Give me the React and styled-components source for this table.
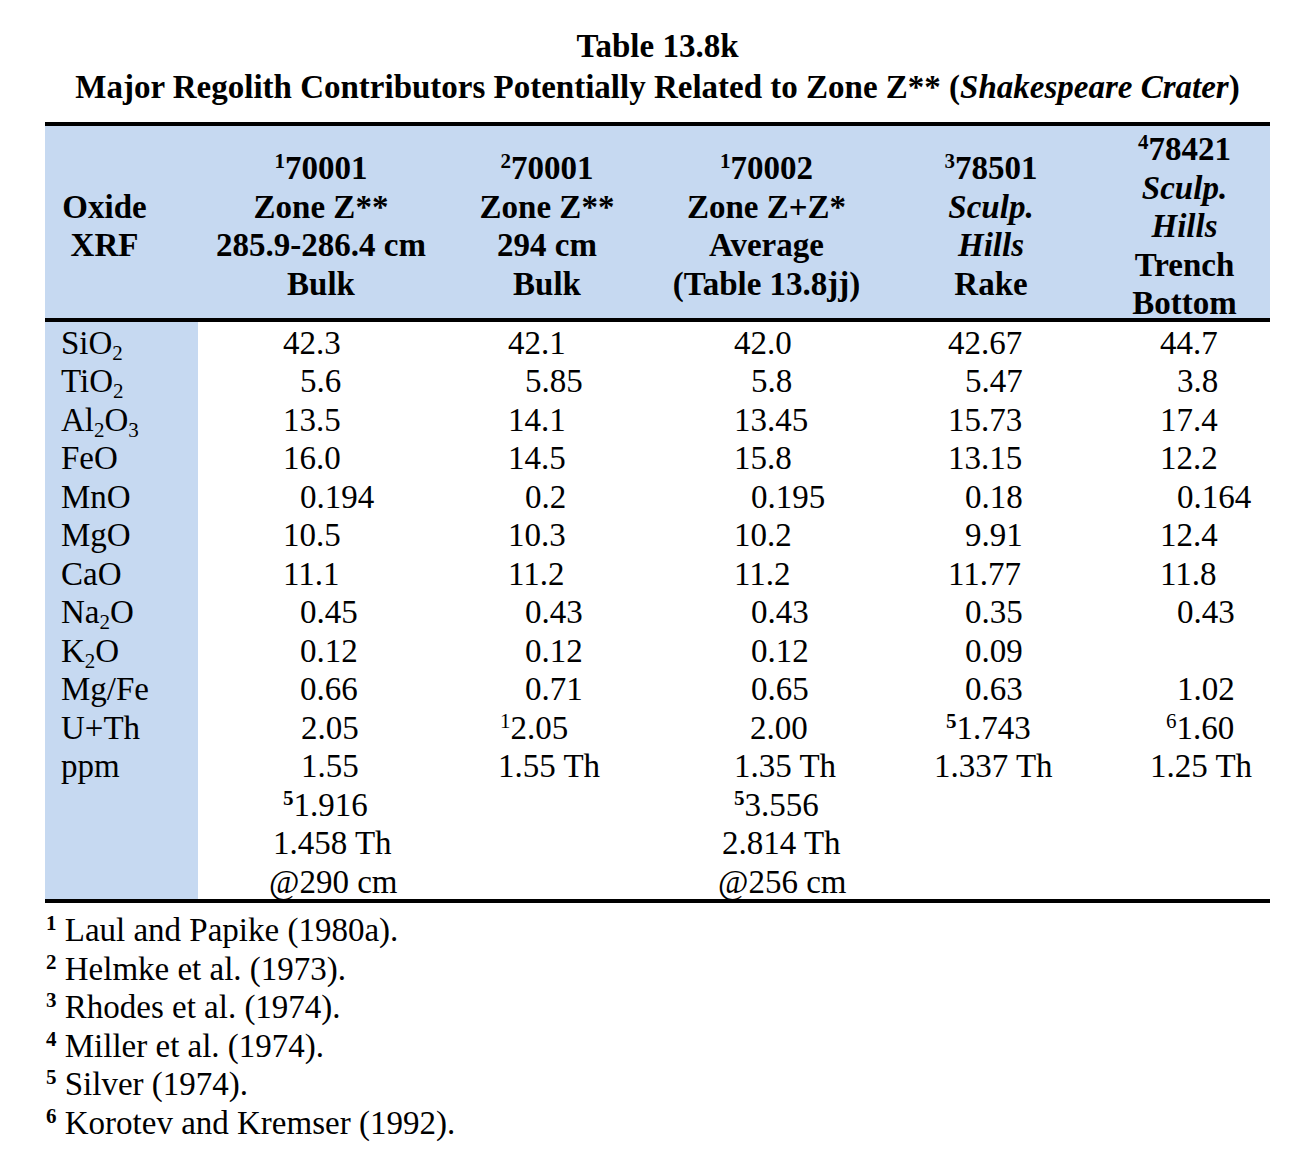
import React from 'react';
import styled, { createGlobalStyle } from 'styled-components';

const Global = createGlobalStyle`
  html, body { margin: 0; padding: 0; background: #fff; }
  body { font-family: "Liberation Serif", "Times New Roman", serif; color: #000; }
`;

const COLS = '153px 246px 206px 233px 216px 171px';
const BLUE = '#c6d9f1';

const Page = styled.div`
  width: 1304px;
  min-height: 1170px;
  box-sizing: border-box;
  padding: 26px 0 0 45px;
`;

const Caption = styled.h1`
  margin: 0;
  width: 1225px;
  text-align: center;
  font-size: 33px;
  line-height: 41px;
  font-weight: bold;
`;

const Table = styled.div`
  width: 1225px;
  margin-top: 14px;
  border-top: 4px solid #000;
  border-bottom: 4px solid #000;
  font-size: 33px;
`;

const HeadRow = styled.div`
  display: grid;
  grid-template-columns: ${COLS};
  height: 192px;
  background: ${BLUE};
  border-bottom: 4px solid #000;
  font-weight: bold;
  line-height: 38.5px;
`;

const HeadCell = styled.div`
  display: flex;
  flex-direction: column;
  justify-content: center;
  align-items: center;
  text-align: center;
  white-space: nowrap;
  padding-top: 4px;
  padding-right: ${p => p.$shift || 0}px;
`;

const Row = styled.div`
  display: grid;
  grid-template-columns: ${COLS};
  line-height: 38.47px;
`;

const LabelCell = styled.div`
  background: ${BLUE};
  padding-left: 16px;
  white-space: nowrap;
`;

const DataCell = styled.div`
  padding-left: ${p => p.$pad}px;
  white-space: nowrap;
`;

const Line = styled.div`
  box-sizing: border-box;
  height: 38.47px;
  padding-top: 2px;
  margin-left: ${p => p.$indent || 0}px;
`;

const Sup = styled.span`
  font-size: 21px;
  line-height: 0;
  vertical-align: 11px;
  font-weight: ${p => (p.$bold ? 'bold' : 'inherit')};
`;

const Sub = styled.span`
  font-size: 21px;
  line-height: 0;
  vertical-align: -6px;
`;

const Ital = styled.span`
  font-style: italic;
`;

const Notes = styled.div`
  margin-top: 8px;
  padding-left: 1px;
  font-size: 33px;
  line-height: 38.5px;
`;

const Note = styled.div`
  white-space: nowrap;
`;

const NoteMark = styled.span`
  font-size: 21px;
  font-weight: bold;
  line-height: 0;
  vertical-align: 11px;
`;

const PADS = [85, 64, 84, 65, 61];
const F = 17;

const headers = [
  { shift: 34, lines: ['Oxide', 'XRF'] },
  { lines: [<><Sup>1</Sup>70001</>, 'Zone Z**', '285.9-286.4 cm', 'Bulk'] },
  { lines: [<><Sup>2</Sup>70001</>, 'Zone Z**', '294 cm', 'Bulk'] },
  { lines: [<><Sup>1</Sup>70002</>, 'Zone Z+Z*', 'Average', '(Table 13.8jj)'] },
  { lines: [<><Sup>3</Sup>78501</>, <Ital>Sculp.</Ital>, <Ital>Hills</Ital>, 'Rake'] },
  { lines: [<><Sup>4</Sup>78421</>, <Ital>Sculp.</Ital>, <Ital>Hills</Ital>, 'Trench', 'Bottom'] },
];

const rows = [
  { label: <>SiO<Sub>2</Sub></>, v: [['42.3', 0], ['42.1', 0], ['42.0', 0], ['42.67', 0], ['44.7', 0]] },
  { label: <>TiO<Sub>2</Sub></>, v: [['5.6', F], ['5.85', F], ['5.8', F], ['5.47', F], ['3.8', F]] },
  { label: <>Al<Sub>2</Sub>O<Sub>3</Sub></>, v: [['13.5', 0], ['14.1', 0], ['13.45', 0], ['15.73', 0], ['17.4', 0]] },
  { label: 'FeO', v: [['16.0', 0], ['14.5', 0], ['15.8', 0], ['13.15', 0], ['12.2', 0]] },
  { label: 'MnO', v: [['0.194', F], ['0.2', F], ['0.195', F], ['0.18', F], ['0.164', F]] },
  { label: 'MgO', v: [['10.5', 0], ['10.3', 0], ['10.2', 0], ['9.91', F], ['12.4', 0]] },
  { label: 'CaO', v: [['11.1', 0], ['11.2', 0], ['11.2', 0], ['11.77', 0], ['11.8', 0]] },
  { label: <>Na<Sub>2</Sub>O</>, v: [['0.45', F], ['0.43', F], ['0.43', F], ['0.35', F], ['0.43', F]] },
  { label: <>K<Sub>2</Sub>O</>, v: [['0.12', F], ['0.12', F], ['0.12', F], ['0.09', F], ['', 0]] },
  { label: 'Mg/Fe', v: [['0.66', F], ['0.71', F], ['0.65', F], ['0.63', F], ['1.02', F]] },
];

const lastRow = [
  [['2.05', 18], ['1.55', 18], [<><Sup $bold>5</Sup>1.916</>, 0], ['1.458 Th', -10], ['@290 cm', -14]],
  [[<><Sup>1</Sup>2.05</>, -8], ['1.55 Th', -10]],
  [['2.00', 16], ['1.35 Th', 0], [<><Sup $bold>5</Sup>3.556</>, 0], ['2.814 Th', -12], ['@256 cm', -16]],
  [[<><Sup $bold>5</Sup>1.743</>, -2], ['1.337 Th', -14]],
  [[<><Sup>6</Sup>1.60</>, 6], ['1.25 Th', -10]],
];

const notes = [
  ['1', 'Laul and Papike (1980a).'],
  ['2', 'Helmke et al. (1973).'],
  ['3', 'Rhodes et al. (1974).'],
  ['4', 'Miller et al. (1974).'],
  ['5', 'Silver (1974).'],
  ['6', 'Korotev and Kremser (1992).'],
];

export default function App() {
  return (
    <>
      <Global />
      <Page>
        <Caption>
          Table 13.8k
          <br />
          Major Regolith Contributors Potentially Related to Zone Z** (<Ital>Shakespeare Crater</Ital>)
        </Caption>
        <Table>
          <HeadRow>
            {headers.map((h, i) => (
              <HeadCell key={i} $shift={h.shift}>
                {h.lines.map((l, j) => (
                  <div key={j}>{l}</div>
                ))}
              </HeadCell>
            ))}
          </HeadRow>
          {rows.map((r, i) => (
            <Row key={i}>
              <LabelCell>
                <Line>{r.label}</Line>
              </LabelCell>
              {r.v.map(([val, ind], j) => (
                <DataCell key={j} $pad={PADS[j]}>
                  <Line $indent={ind}>{val}</Line>
                </DataCell>
              ))}
            </Row>
          ))}
          <Row>
            <LabelCell>
              <Line>U+Th</Line>
              <Line>ppm</Line>
            </LabelCell>
            {lastRow.map((col, j) => (
              <DataCell key={j} $pad={PADS[j]}>
                {col.map(([val, ind], k) => (
                  <Line key={k} $indent={ind}>{val}</Line>
                ))}
              </DataCell>
            ))}
          </Row>
        </Table>
        <Notes>
          {notes.map(([n, t]) => (
            <Note key={n}>
              <NoteMark>{n}</NoteMark> {t}
            </Note>
          ))}
        </Notes>
      </Page>
    </>
  );
}
